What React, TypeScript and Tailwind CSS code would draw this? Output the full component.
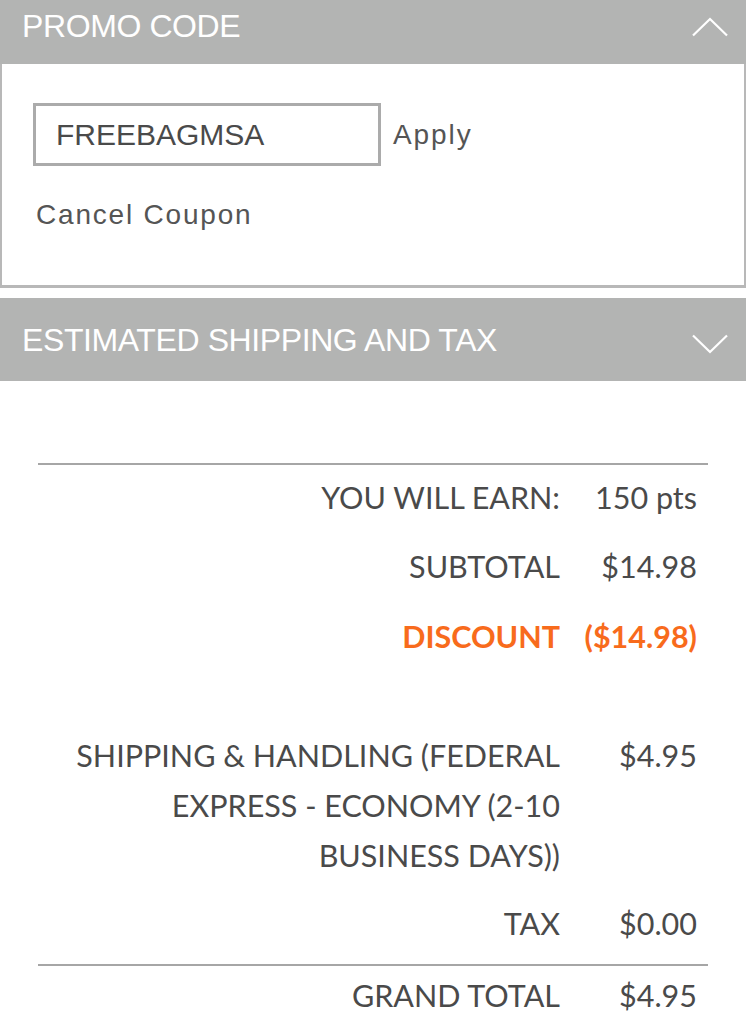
const rows = [
  { label: 'YOU WILL EARN:', value: '150 pts', mt: 'mt-[7px]' },
  { label: 'SUBTOTAL', value: '$14.98', mt: 'mt-[19px]' },
];

function Chevron({ up }: { up: boolean }) {
  return (
    <svg width="36" height="20" viewBox="0 0 36 20" fill="none" stroke="white" strokeWidth="2.2">
      <polyline points={up ? '1,18.5 18,2 35,18.5' : '1,1.5 18,18 35,1.5'} />
    </svg>
  );
}

function Header({ title, open }: { title: string; open: boolean }) {
  return (
    <div
      className={`flex justify-between bg-[#b3b4b3] pl-[22px] pr-[18px] text-white ${
        open ? 'h-[64px] pt-[10px]' : 'h-[83px] items-center'
      }`}
    >
      <span className="font-['Liberation_Sans',Arial,sans-serif] text-[32px] leading-[32px] tracking-[-0.4px]">
        {title}
      </span>
      <div className={open ? 'pt-[7px]' : 'pt-[8px]'}>
        <Chevron up={open} />
      </div>
    </div>
  );
}

export default function App() {
  return (
    <div className="min-h-[1024px] w-[746px] bg-white">
      {/* 프로모 코드 */}
      <Header title="PROMO CODE" open />
      <div className="h-[224px] border-x-2 border-b-[3px] border-[#b8b8b8] pl-[31px] pt-[39px] font-['Liberation_Sans',Arial,sans-serif]">
        <div className="flex items-center">
          <div className="flex h-[63px] w-[348px] items-center border-[3px] border-[#ababab] pl-[20px] text-[30px] text-[#4a4a4a]">
            FREEBAGMSA
          </div>
          <button className="ml-[12px] text-[28px] tracking-[1.9px] text-[#555]">Apply</button>
        </div>
        <div className="mt-[33px] pl-[3px] text-[28px] leading-[32px] tracking-[1.8px] text-[#555]">
          Cancel Coupon
        </div>
      </div>

      <div className="h-[10px]" />
      <Header title="ESTIMATED SHIPPING AND TAX" open={false} />

      {/* 합계 */}
      <div className="px-[38px] pb-[4px] font-['Lato',sans-serif] text-[30.5px] leading-[50px] text-[#4a4a4a]">
        <div className="mt-[82px] h-[2px] bg-[#a6a6a6]" />
        {rows.map((r) => (
          <div key={r.label} className={`flex pr-[11px] ${r.mt}`}>
            <div className="flex-1 text-right">{r.label}</div>
            <div className="w-[137px] text-right">{r.value}</div>
          </div>
        ))}
        <div className="mt-[20px] flex pr-[11px] font-bold text-[#f86b1c]">
          <div className="flex-1 text-right">DISCOUNT</div>
          <div className="w-[137px] text-right">($14.98)</div>
        </div>
        <div className="mt-[69px] flex pr-[11px]">
          <div className="flex-1 text-right">
            SHIPPING &amp; HANDLING (FEDERAL
            <br />
            EXPRESS - ECONOMY (2-10
            <br />
            BUSINESS DAYS))
          </div>
          <div className="w-[137px] text-right">$4.95</div>
        </div>
        <div className="mt-[18px] flex pr-[11px]">
          <div className="flex-1 text-right">TAX</div>
          <div className="w-[137px] text-right">$0.00</div>
        </div>
        <div className="mt-[16px] h-[2px] bg-[#a6a6a6]" />
        <div className="mt-[4px] flex pr-[11px]">
          <div className="flex-1 text-right">GRAND TOTAL</div>
          <div className="w-[137px] text-right">$4.95</div>
        </div>
      </div>
    </div>
  );
}
